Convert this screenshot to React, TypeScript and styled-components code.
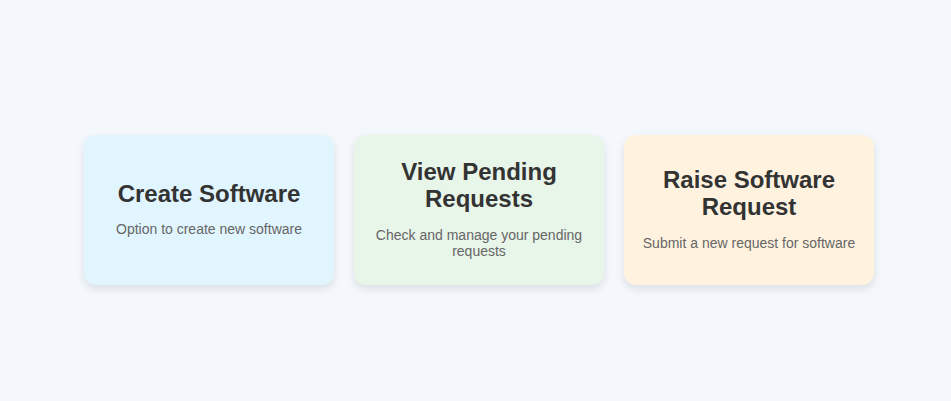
import React from "react";
import styled, { createGlobalStyle } from "styled-components";

const Global = createGlobalStyle`
  html, body { margin: 0; padding: 0; }
  body {
    background: #f4f7fb;
    font-family: "Liberation Sans", Arial, sans-serif;
  }
`;

const Page = styled.div`
  height: 401px;
  display: flex;
  align-items: center;
  justify-content: center;
  padding: 19px 0 0 7px;
  box-sizing: border-box;
`;

const Grid = styled.div`
  display: flex;
  gap: 20px;
`;

const Card = styled.div<{ $bg: string }>`
  width: 250px;
  height: 150px;
  box-sizing: border-box;
  padding: 15px 15px 18px;
  border-radius: 12px;
  background: ${(p) => p.$bg};
  box-shadow: 0 4px 8px rgba(0, 0, 0, 0.1);
  display: flex;
  flex-direction: column;
  align-items: center;
  justify-content: center;
  text-align: center;
  cursor: pointer;
`;

const Title = styled.h2`
  margin: 0 0 14px;
  font-size: 24px;
  font-weight: bold;
  color: #333;
  line-height: 1.15;
`;

const Desc = styled.p`
  margin: 0;
  font-size: 14px;
  color: #666;
  line-height: 1.15;
`;

const items = [
  { bg: "#e1f5fe", title: "Create Software", desc: "Option to create new software" },
  { bg: "#e8f5e9", title: "View Pending Requests", desc: "Check and manage your pending requests" },
  { bg: "#fff3e0", title: "Raise Software Request", desc: "Submit a new request for software" },
];

export default function App() {
  return (
    <>
      <Global />
      <Page>
        <Grid>
          {items.map((it) => (
            <Card key={it.title} $bg={it.bg}>
              <Title>{it.title}</Title>
              <Desc>{it.desc}</Desc>
            </Card>
          ))}
        </Grid>
      </Page>
    </>
  );
}
